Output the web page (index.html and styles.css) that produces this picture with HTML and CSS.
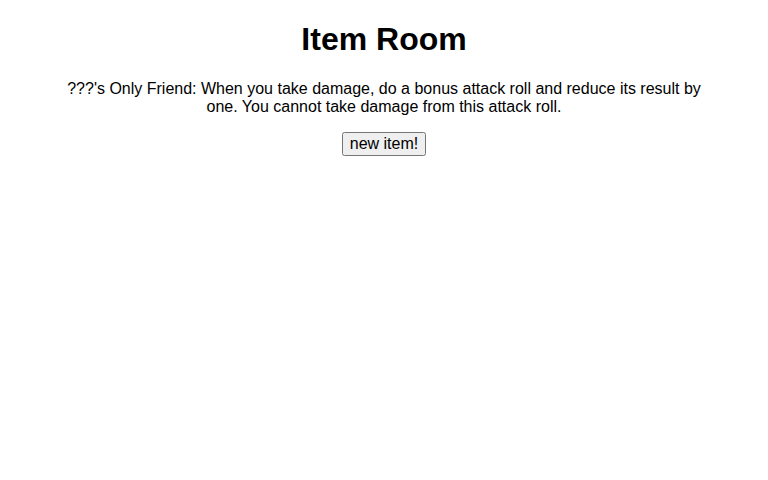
FILE: index.html
```html
<!DOCTYPE html>
<html lang="en">
<head>
<meta charset="utf-8">
<title>Item Room</title>
<link rel="stylesheet" href="styles.css">
</head>
<body>
<main class="room">
  <h1 class="room-title">Item Room</h1>
  <p class="item-text">???'s Only Friend: When you take damage, do a bonus attack roll and reduce its result by one. You cannot take damage from this attack roll.</p>
  <button class="new-item" type="button">new item!</button>
</main>
</body>
</html>
```
FILE: styles.css
```css
body {
  margin: 0 8px;
  font-family: "Liberation Sans", Arial, sans-serif;
  color: #000;
  background: #fff;
}

.room {
  text-align: center;
  padding-top: 1px;
}

.room-title {
  font-size: 32px;
  margin: 20.44px 0 21.44px;
}

.item-text {
  max-width: 640px;
  margin: 16px auto;
  font-size: 16px;
}

.new-item {
  font-family: "Liberation Sans", Arial, sans-serif;
  font-size: 16px;
}
```
